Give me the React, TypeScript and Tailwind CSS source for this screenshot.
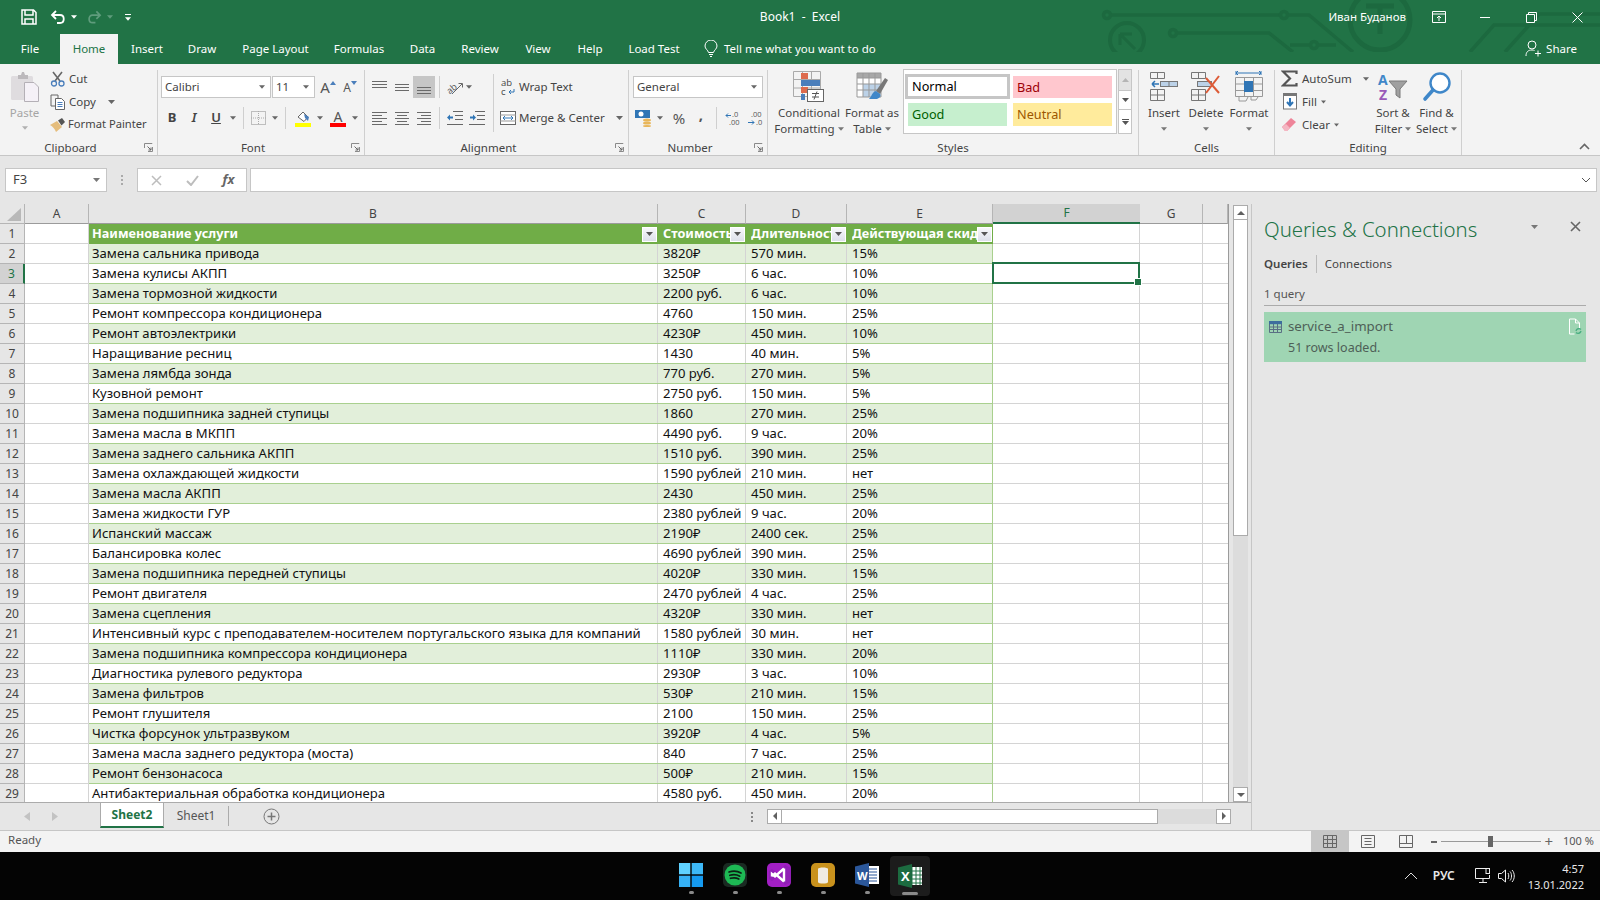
import React from "react";

const rows: [string, string, string, string][] = [
  ["Замена сальника привода", "3820₽", "570 мин.", "15%"],
  ["Замена кулисы АКПП", "3250₽", "6 час.", "10%"],
  ["Замена тормозной жидкости", "2200 руб.", "6 час.", "10%"],
  ["Ремонт компрессора кондиционера", "4760", "150 мин.", "25%"],
  ["Ремонт автоэлектрики", "4230₽", "450 мин.", "10%"],
  ["Наращивание ресниц", "1430", "40 мин.", "5%"],
  ["Замена лямбда зонда", "770 руб.", "270 мин.", "5%"],
  ["Кузовной ремонт", "2750 руб.", "150 мин.", "5%"],
  ["Замена подшипника задней ступицы", "1860", "270 мин.", "25%"],
  ["Замена масла в МКПП", "4490 руб.", "9 час.", "20%"],
  ["Замена заднего сальника АКПП", "1510 руб.", "390 мин.", "25%"],
  ["Замена охлаждающей жидкости", "1590 рублей", "210 мин.", "нет"],
  ["Замена масла АКПП", "2430", "450 мин.", "25%"],
  ["Замена жидкости ГУР", "2380 рублей", "9 час.", "20%"],
  ["Испанский массаж", "2190₽", "2400 сек.", "25%"],
  ["Балансировка колес", "4690 рублей", "390 мин.", "25%"],
  ["Замена подшипника передней ступицы", "4020₽", "330 мин.", "15%"],
  ["Ремонт двигателя", "2470 рублей", "4 час.", "25%"],
  ["Замена сцепления", "4320₽", "330 мин.", "нет"],
  ["Интенсивный курс с преподавателем-носителем португальского языка для компаний", "1580 рублей", "30 мин.", "нет"],
  ["Замена подшипника компрессора кондиционера", "1110₽", "330 мин.", "20%"],
  ["Диагностика рулевого редуктора", "2930₽", "3 час.", "10%"],
  ["Замена фильтров", "530₽", "210 мин.", "15%"],
  ["Ремонт глушителя", "2100", "150 мин.", "25%"],
  ["Чистка форсунок ультразвуком", "3920₽", "4 час.", "5%"],
  ["Замена масла заднего редуктора (моста)", "840", "7 час.", "25%"],
  ["Ремонт бензонасоса", "500₽", "210 мин.", "15%"],
  ["Антибактериальная обработка кондиционера", "4580 руб.", "450 мин.", "20%"],
];

function Caret({ c = "#666", w = 7 }: { c?: string; w?: number }) {
  return (
    <svg width={w} height={4} viewBox="0 0 7 4" className="shrink-0">
      <path d="M0 0h7L3.5 4z" fill={c} />
    </svg>
  );
}

function Launcher() {
  return (
    <svg width="9" height="9" viewBox="0 0 9 9" className="shrink-0">
      <path d="M.5 5V.5H8V1" fill="none" stroke="#8a8a8a" />
      <path d="M8.5 4v4.5H4" fill="none" stroke="#8a8a8a" />
      <path d="M3.5 3.5L7 7M7 4.5V7H4.5" fill="none" stroke="#666" />
    </svg>
  );
}

function Lines({ l, c = "#6a6a6a", w = 16, h = 14 }: { l: [number, number, number][]; c?: string; w?: number; h?: number }) {
  return (
    <svg width={w} height={h} viewBox={`0 0 ${w} ${h}`}>
      {l.map(([a, b, y], i) => (
        <path key={i} d={`M${a} ${y + 0.5}H${b}`} stroke={c} strokeWidth="1" />
      ))}
    </svg>
  );
}

function Group({ w, label, launcher, children }: { w: string; label: string; launcher?: boolean; children: React.ReactNode }) {
  return (
    <div className={`${w} shrink-0 h-[85px] mt-[6px] flex flex-col border-r border-[#cfcfcf]`}>
      <div className="h-[70px] flex">{children}</div>
      <div className={`h-[15px] flex items-center relative ${launcher ? "pr-[16px]" : ""}`}>
        <span className="flex-1 text-center text-[11.5px] text-[#444] leading-[15px]">{label}</span>
        {launcher && (
          <span className="absolute right-[4px] top-[3px]">
            <Launcher />
          </span>
        )}
      </div>
    </div>
  );
}

function Big({ w, icon, l1, l2 }: { w: string; icon: React.ReactNode; l1: string; l2?: string }) {
  return (
    <div className={`${w} shrink-0 flex flex-col items-center`}>
      <div className="h-[35px] flex items-center justify-center mt-[-1px]">{icon}</div>
      <div className="text-[11.5px] leading-[15px] text-[#444] h-[15px] mt-[1px] whitespace-nowrap">{l1}</div>
      <div className="text-[11.5px] leading-[15px] text-[#444] h-[15px] mt-px flex items-center gap-[3px] whitespace-nowrap">
        {l2}
        <Caret c="#777" w={6} />
      </div>
    </div>
  );
}

function Cell22({ children, w = "w-[22px]", on }: { children?: React.ReactNode; w?: string; on?: boolean }) {
  return <div className={`${w} h-[22px] shrink-0 flex items-center justify-center ${on ? "bg-[#c6c6c6]" : ""}`}>{children}</div>;
}

function VSep({ h = "h-[22px]", mx = "mx-[3px]" }: { h?: string; mx?: string }) {
  return <div className={`w-px ${h} ${mx} bg-[#cfcfcf] shrink-0`} />;
}

function ComboBox({ w, text }: { w: string; text: string }) {
  return (
    <div className={`${w} h-[22px] bg-white border border-[#c6c6c6] flex items-center justify-between pl-[3px] pr-[5px] text-[11.5px] text-[#444] shrink-0`}>
      <span>{text}</span>
      <Caret c="#666" w={6} />
    </div>
  );
}

function PasteIcon() {
  return (
    <svg width="30" height="34" viewBox="0 0 30 34">
      <rect x="1" y="5" width="22" height="24" rx="1.5" fill="#dfdcdf" />
      <path d="M8 4h3l1-3h2l1 3h3v4H8z" fill="#bcb9bc" />
      <path d="M14.5 11.5H24l4.5 4.5v14.5h-14z" fill="#f5f1f7" stroke="#b4b0b6" />
    </svg>
  );
}
function CutIcon() {
  return (
    <svg width="16" height="16" viewBox="0 0 16 16" fill="none">
      <path d="M3 1l7 9M12 1L5 10" stroke="#666" strokeWidth="1.6" />
      <circle cx="4" cy="12.5" r="2.5" stroke="#4a7ebb" strokeWidth="1.3" />
      <circle cx="11.5" cy="12.5" r="2.5" stroke="#4a7ebb" strokeWidth="1.3" />
    </svg>
  );
}
function CopyIcon() {
  return (
    <svg width="16" height="16" viewBox="0 0 16 16" fill="none">
      <path d="M1 1h7v3M1 1v11h4" stroke="#666" />
      <path d="M5.5 4.5h6l3 3v8h-9z" fill="#fff" stroke="#666" />
      <path d="M7.5 8.5h5M7.5 10.5h5M7.5 12.5h5" stroke="#4a7ebb" />
    </svg>
  );
}
function PainterIcon() {
  return (
    <svg width="18" height="15" viewBox="0 0 18 15">
      <path d="M1 8l7-4 5 6-6 5C6 12 3 9 1 8z" fill="#e5bd7c" />
      <path d="M9 3.5l4-2.5 3 4-3.5 3.5z" fill="#555" />
    </svg>
  );
}
function ClipboardGroup() {
  return (
    <Group w="w-[158px]" label="Clipboard" launcher>
      <div className="w-[49px] flex flex-col items-center shrink-0">
        <div className="h-[35px] flex items-center">
          <PasteIcon />
        </div>
        <div className="text-[11.5px] leading-[15px] text-[#a5a5a5]">Paste</div>
        <div className="mt-[6px]">
          <Caret c="#b0b0b0" w={6} />
        </div>
      </div>
      <div className="flex flex-col text-[11.5px] text-[#444] mt-[-3px]">
        <div className="h-[23px] flex items-center gap-[2px]">
          <span className="w-[18px] flex justify-center"><CutIcon /></span>Cut
        </div>
        <div className="h-[23px] flex items-center gap-[2px]">
          <span className="w-[18px] flex justify-center"><CopyIcon /></span>Copy
          <span className="ml-[10px]"><Caret /></span>
        </div>
        <div className="h-[23px] flex items-center gap-[1px] text-[11.2px]">
          <span className="w-[18px] flex justify-center"><PainterIcon /></span>Format Painter
        </div>
      </div>
    </Group>
  );
}

function FontGroup() {
  return (
    <Group w="w-[207px]" label="Font" launcher>
      <div className="flex flex-col pt-[6px] pl-[3px] gap-[9px]">
        <div className="flex items-center">
          <ComboBox w="w-[110px]" text="Calibri" />
          <ComboBox w="w-[43px] ml-px" text="11" />
          <div className="w-[22px] ml-[2px] flex justify-center items-start text-[15px] leading-[15px] text-[#555]">
            A
            <svg width="6" height="4" className="mt-[1px]"><path d="M3 0l3 4H0z" fill="#4a7ebb" /></svg>
          </div>
          <div className="w-[22px] flex justify-center items-end text-[12px] leading-[15px] text-[#555]">
            A
            <svg width="6" height="4" className="mb-[10px]"><path d="M3 4L0 0h6z" fill="#4a7ebb" /></svg>
          </div>
        </div>
        <div className="flex items-center">
          <Cell22><span className="text-[13px] font-bold text-[#444]">B</span></Cell22>
          <Cell22><span className="text-[13px] italic font-semibold text-[#444] font-['Liberation_Serif',serif]">I</span></Cell22>
          <Cell22><span className="text-[13px] font-semibold underline text-[#444]">U</span></Cell22>
          <Cell22 w="w-[11px]"><Caret w={6} /></Cell22>
          <VSep mx="mx-[5px]" />
          <Cell22 w="w-[22px] ml-[-2px]">
            <svg width="15" height="14" viewBox="0 0 15 14">
              <rect x=".5" y=".5" width="14" height="13" fill="none" stroke="#888" strokeDasharray="1 1" />
              <path d="M7.5 0v14M0 7h15" stroke="#aaa" strokeDasharray="1 1" />
            </svg>
          </Cell22>
          <Cell22 w="w-[11px]"><Caret w={6} /></Cell22>
          <VSep mx="mx-[5px]" />
          <Cell22 w="w-[22px] ml-[1px]">
            <svg width="17" height="17" viewBox="0 0 17 17">
              <path d="M3 7l5-5 5 5-4 4.5z" fill="#fff" stroke="#666" />
              <path d="M9 4l5 3-1 4-3-3z" fill="#4a7ebb" />
              <rect x="0" y="13" width="16" height="4" fill="#ffff00" />
            </svg>
          </Cell22>
          <Cell22 w="w-[11px]"><Caret w={6} /></Cell22>
          <Cell22 w="w-[22px] ml-[2px]">
            <div className="flex flex-col items-center leading-none">
              <span className="text-[14px] leading-[13px] text-[#555]">A</span>
              <span className="w-[16px] h-[4px] bg-[#ff0000]" />
            </div>
          </Cell22>
          <Cell22 w="w-[11px]"><Caret w={6} /></Cell22>
        </div>
      </div>
    </Group>
  );
}

function AlignmentGroup() {
  const L = (l: [number, number, number][]) => <Lines l={l} />;
  return (
    <Group w="w-[264px]" label="Alignment" launcher>
      <div className="flex flex-col pt-[6px] pl-[4px] gap-[9px] w-[128px] shrink-0">
        <div className="flex items-center">
          <Cell22>{L([[0, 15, 1], [0, 15, 4], [0, 15, 7]])}</Cell22>
          <Cell22>{L([[1, 15, 4], [1, 15, 7], [1, 15, 10]])}</Cell22>
          <Cell22 on>{L([[1, 15, 7], [1, 15, 10], [1, 15, 13]])}</Cell22>
          <VSep mx="mx-[4px]" />
          <Cell22>
            <svg width="18" height="16" viewBox="0 0 18 16" fill="none" className="overflow-visible">
              <text x="1" y="12" fontSize="9" fill="#555" transform="rotate(-40 7 10)" fontFamily="Open Sans">ab</text>
              <path d="M6 15L16 5M12.5 4.5H16.5V8.5" stroke="#666" />
            </svg>
          </Cell22>
          <Caret w={6} />
        </div>
        <div className="flex items-center">
          <Cell22>{L([[0, 15, 1], [0, 10, 4], [0, 15, 7], [0, 10, 10], [0, 15, 13]])}</Cell22>
          <Cell22>{L([[1, 15, 1], [3, 13, 4], [1, 15, 7], [3, 13, 10], [1, 15, 13]])}</Cell22>
          <Cell22>{L([[1, 15, 1], [5, 15, 4], [1, 15, 7], [5, 15, 10], [1, 15, 13]])}</Cell22>
          <VSep mx="mx-[4px]" />
          <Cell22>
            <svg width="16" height="14" viewBox="0 0 16 14">
              <path d="M6 .5h10M8 4.500h8M8 8.500h8M0 13.500h16" stroke="#666" />
              <path d="M0 6.500l3-3v2h3v2H3v2z" fill="#2f75b5" />
            </svg>
          </Cell22>
          <Cell22>
            <svg width="16" height="14" viewBox="0 0 16 14">
              <path d="M6 .5h10M8 4.500h8M8 8.500h8M0 13.500h16" stroke="#666" />
              <path d="M7 6.500l-3-3v2H1v2h3v2z" fill="#2f75b5" />
            </svg>
          </Cell22>
        </div>
      </div>
      <div className="w-px h-[58px] mt-[4px] bg-[#cfcfcf] shrink-0" />
      <div className="flex flex-col pt-[6px] pl-[6px] gap-[9px] text-[11.5px] text-[#444]">
        <div className="h-[22px] flex items-center gap-[3px]">
          <svg width="16" height="18" viewBox="0 0 16 18" className="overflow-visible">
            <text x="1" y="8" fontSize="9.500" fill="#444" fontFamily="Open Sans">ab</text>
            <text x="1" y="17" fontSize="9.500" fill="#444" fontFamily="Open Sans">c</text>
            <path d="M9 14h5v-3M9 14l2-2M9 14l2 2" stroke="#2f75b5" fill="none" />
          </svg>
          Wrap Text
        </div>
        <div className="h-[22px] flex items-center gap-[3px]">
          <svg width="16" height="16" viewBox="0 0 16 16" fill="none">
            <rect x=".5" y="1.500" width="15" height="13" fill="#fff" stroke="#666" />
            <path d="M0 5h16M0 11h16" stroke="#999" />
            <path d="M3 8h10M3 8l2-2M3 8l2 2M13 8l-2-2M13 8l-2 2" stroke="#2f75b5" />
          </svg>
          Merge &amp; Center
          <span className="ml-[8px]"><Caret /></span>
        </div>
      </div>
    </Group>
  );
}

function NumberGroup() {
  return (
    <Group w="w-[139px]" label="Number" launcher>
      <div className="flex flex-col pt-[6px] pl-[4px] gap-[9px]">
        <ComboBox w="w-[130px]" text="General" />
        <div className="flex items-center">
          <Cell22>
            <svg width="18" height="18" viewBox="0 0 18 18">
              <rect x="0" y="1" width="15" height="8" fill="#2f75b5" />
              <circle cx="6" cy="5" r="2.500" fill="#fff" />
              <ellipse cx="12" cy="11" rx="4" ry="1.600" fill="#e8b65a" />
              <ellipse cx="12" cy="14" rx="4" ry="1.600" fill="#e8b65a" />
              <ellipse cx="12" cy="17" rx="4" ry="1.100" fill="#e8b65a" />
            </svg>
          </Cell22>
          <Cell22 w="w-[10px]"><Caret w={6} /></Cell22>
          <Cell22 w="w-[26px] ml-[1px]"><span className="text-[15px] text-[#555]">%</span></Cell22>
          <Cell22 w="w-[18px]"><span className="text-[15px] font-bold text-[#555] leading-none mb-[7px]">,</span></Cell22>
          <VSep mx="mx-[6px]" />
          <Cell22>
            <svg width="17" height="15" viewBox="0 0 17 15" className="overflow-visible">
              <text x="6" y="6" fontSize="7.500" fill="#555" fontFamily="Open Sans">.0</text>
              <text x="3" y="14" fontSize="7.500" fill="#555" fontFamily="Open Sans">.00</text>
              <path d="M0 4.500h5M0 4.500l2-2M0 4.500l2 2" stroke="#2f75b5" fill="none" />
            </svg>
          </Cell22>
          <Cell22>
            <svg width="17" height="15" viewBox="0 0 17 15" className="overflow-visible">
              <text x="3" y="6" fontSize="7.500" fill="#555" fontFamily="Open Sans">.00</text>
              <text x="8" y="14" fontSize="7.500" fill="#555" fontFamily="Open Sans">.0</text>
              <path d="M0 11.500h6M6 11.500l-2-2M6 11.500l-2 2" stroke="#2f75b5" fill="none" />
            </svg>
          </Cell22>
        </div>
      </div>
    </Group>
  );
}

function CondIcon() {
  return (
    <svg width="32" height="32" viewBox="0 0 32 32">
      <path d="M.5.5h27v25H.5zM9.500.5v25M18.500.5v25M.5 8.500h27M.5 17h27" fill="none" stroke="#aaa" />
      <rect x="8" y="2" width="7" height="6" fill="#dd6b4d" />
      <rect x="8" y="9" width="19" height="6" fill="#4a7ebb" />
      <rect x="8" y="16" width="7" height="6" fill="#dd6b4d" />
      <rect x="8" y="23" width="4" height="6" fill="#4a7ebb" />
      <rect x="14.500" y="18.500" width="16" height="12" fill="#fff" stroke="#666" />
      <path d="M19 22.500h7M19 26h7M24 20.500l-3 8" stroke="#555" fill="none" />
    </svg>
  );
}
function TableIcon() {
  return (
    <svg width="32" height="32" viewBox="0 0 32 32">
      <rect x="1" y="2" width="24" height="24" fill="#fff" />
      <rect x="1" y="2" width="24" height="5" fill="#a8a8a8" />
      <rect x="7" y="13" width="18" height="13" fill="#bcd2e8" />
      <path d="M1 2v24h24V2zM7 2v24M13 2v24M19 2v24M1 7h24M1 13h24M1 19h24" fill="none" stroke="#999" />
      <path d="M20 20l9-13 3 2-8 14z" fill="#777" />
      <path d="M20 20c-4 1-4 5-7 8h8c3-1 4-3 3-5z" fill="#3f87c9" />
    </svg>
  );
}
function InsertIcon() {
  return (
    <svg width="28" height="30" viewBox="0 0 28 30" fill="none">
      <path d="M.5.5h14v6H.5zM7.500.5v6M.5 17.500h14v11H.5zM7.500 17.500v11M.5 23h14" stroke="#777" />
      <rect x="10.500" y="9.500" width="17" height="5" fill="#bcd2e8" stroke="#777" />
      <path d="M19 9.500v5" stroke="#777" />
      <path d="M2 12h7M2 12l3-3M2 12l3 3" stroke="#2f75b5" strokeWidth="1.500" />
    </svg>
  );
}
function DeleteIcon() {
  return (
    <svg width="30" height="30" viewBox="0 0 30 30" fill="none">
      <path d="M.5.5h14v6H.5zM7.500.5v6M.5 17.500h14v11H.5zM7.500 17.500v11M.5 23h14" stroke="#777" />
      <rect x="6.500" y="9.500" width="14" height="5" fill="#bcd2e8" stroke="#777" />
      <path d="M15 6l13 15M28 4L15 21" stroke="#dd5b37" strokeWidth="2" />
    </svg>
  );
}
function FormatIcon() {
  return (
    <svg width="28" height="32" viewBox="0 0 28 32" fill="none">
      <path d="M1 2h25M1 0v4M26 0v4M1 2l2-2M1 2l2 2M26 2l-2-2M26 2l-2 2" stroke="#2f75b5" />
      <path d="M.5 6.500h27v19H.5zM9.500 6.500v19M18.500 6.500v19M.5 13h27M.5 19.500h27" stroke="#999" />
      <rect x="9" y="10" width="9" height="11" fill="#2f75b5" />
      <path d="M4 26v4h7l2-4M16 26v3h5l2-3" stroke="#999" />
    </svg>
  );
}
function StylesGroup() {
  return (
    <Group w="w-[371px]" label="Styles">
      <div className="ml-[8px]" />
      <Big w="w-[66px]" icon={<CondIcon />} l1="Conditional" l2="Formatting" />
      <Big w="w-[60px]" icon={<TableIcon />} l1="Format as" l2="Table" />
      <div className="ml-[1px] mt-[-1px] w-[214px] h-[65px] bg-white border border-[#c6c6c6] flex flex-col gap-[5px] p-[1px] pt-[4px] shrink-0 text-[12.7px] leading-none">
        <div className="flex gap-[3px] h-[25px]">
          <div className="w-[105px] border-[3px] border-[#c6c6c6] flex items-center pl-[4px] text-[#000]">Normal</div>
          <div className="w-[99px] h-[22px] mt-[2px] bg-[#ffc7ce] flex items-center pl-[4px] text-[#9c0006]">Bad</div>
        </div>
        <div className="flex gap-[3px] h-[23px] mt-[-1px]">
          <div className="w-[99px] ml-[3px] mr-[3px] bg-[#c6efce] flex items-center pl-[4px] text-[#006100]">Good</div>
          <div className="w-[99px] bg-[#ffeb9c] flex items-center pl-[4px] text-[#9c5700]">Neutral</div>
        </div>
      </div>
      <div className="w-[14px] mt-[-1px] h-[65px] ml-px flex flex-col border border-[#c6c6c6] shrink-0">
        <div className="h-[21px] bg-[#e3e3e3] border-b border-[#c6c6c6] flex items-center justify-center">
          <svg width="7" height="4"><path d="M3.500 0L7 4H0z" fill="#b5b5b5" /></svg>
        </div>
        <div className="h-[19px] bg-white border-b border-[#c6c6c6] flex items-center justify-center"><Caret c="#555" /></div>
        <div className="flex-1 bg-white flex flex-col gap-[1px] items-center justify-center">
          <span className="w-[7px] h-px bg-[#555]" />
          <Caret c="#555" />
        </div>
      </div>
    </Group>
  );
}

function CellsGroup() {
  return (
    <Group w="w-[136px]" label="Cells">
      <div className="ml-[4px]" />
      <Big w="w-[42px]" icon={<InsertIcon />} l1="Insert" />
      <Big w="w-[42px]" icon={<DeleteIcon />} l1="Delete" />
      <Big w="w-[44px]" icon={<FormatIcon />} l1="Format" />
    </Group>
  );
}

function EditingGroup() {
  return (
    <Group w="w-[187px]" label="Editing">
      <div className="flex flex-col w-[96px] pl-[6px] shrink-0 text-[11.5px] text-[#444] mt-[-3px]">
        <div className="h-[23px] flex items-center gap-[4px]">
          <svg width="17" height="17" viewBox="0 0 17 17" className="shrink-0"><path d="M15.500 4V1.500H2L9 8.500 2 15.500h13.500V13" fill="none" stroke="#555" strokeWidth="2.200" /></svg>
          AutoSum
          <span className="ml-[7px]"><Caret w={6} /></span>
        </div>
        <div className="h-[23px] flex items-center gap-[4px]">
          <svg width="17" height="17" viewBox="0 0 17 17" className="shrink-0">
            <rect x="2.500" y=".5" width="13" height="15.500" fill="#fff" stroke="#777" />
            <rect x="2" y="0" width="14" height="3" fill="#777" />
            <path d="M9 5v7M6 9l3 3.500L12 9" stroke="#2f75b5" strokeWidth="2" fill="none" />
          </svg>
          Fill<Caret w={5} />
        </div>
        <div className="h-[23px] flex items-center gap-[4px]">
          <svg width="17" height="15" viewBox="0 0 17 15" className="shrink-0">
            <path d="M1 10l9-9 5 4-9 9H4z" fill="#ee8499" />
            <path d="M1 10l4-3 4 4-3 3H4z" fill="#f4b6c2" />
          </svg>
          Clear<Caret w={5} />
        </div>
      </div>
      <Big
        w="w-[44px]"
        icon={
          <svg width="32" height="30" viewBox="0 0 32 30">
            <text x="1" y="13" fontSize="14" fontWeight="700" fill="#3f87c9" fontFamily="Open Sans">A</text>
            <text x="2" y="28" fontSize="14" fontWeight="700" fill="#9a5bb8" fontFamily="Open Sans">Z</text>
            <path d="M12 9h18l-7 8v9l-4-3v-6z" fill="#a0a0a0" stroke="#7a7a7a" />
          </svg>
        }
        l1="Sort &"
        l2="Filter"
      />
      <Big
        w="w-[43px]"
        icon={
          <svg width="30" height="32" viewBox="0 0 30 32" fill="none">
            <circle cx="18" cy="12" r="9.500" stroke="#3f87c9" strokeWidth="2.400" fill="#fff" />
            <path d="M11 19l-8 9" stroke="#3f87c9" strokeWidth="3.600" strokeLinecap="round" />
          </svg>
        }
        l1="Find &"
        l2="Select"
      />
    </Group>
  );
}

function FilterBtn() {
  return (
    <div className="w-[15px] h-[15px] bg-gradient-to-b from-[#f7f8fb] to-[#dde0ea] border border-[#fff] flex items-center justify-center shrink-0 mr-[1px]">
      <Caret c="#555" w={7} />
    </div>
  );
}

function HeaderCol({ w, t, on }: { w: string; t: string; on?: boolean }) {
  return (
    <div className={`${w} h-5 shrink-0 flex items-center justify-center text-[12px] ${on ? "bg-[#d2d2d2] text-[#217346] border-b-2 border-[#217346]" : "bg-[#e6e6e6] text-[#444] border-b border-[#9b9b9b] border-r border-r-[#b5b5b5]"}`}>
      {t}
    </div>
  );
}

function EmptyCells({ n }: { n: number }) {
  const border = "h-5 shrink-0 bg-white border-r border-b border-[#d4d4d4]";
  return (
    <>
      <div className={`w-[147px] ${border} relative`}>
        {n === 3 && (
          <div className="absolute left-[-1px] top-[-2px] w-[148px] h-[22px] border-2 border-[#217346] z-10">
            <div className="absolute right-[-4px] bottom-[-4px] w-[6px] h-[6px] bg-[#217346] border border-white box-content" />
          </div>
        )}
      </div>
      <div className={`w-[63px] ${border}`} />
      <div className="w-[25px] h-5 shrink-0 bg-white border-b border-[#d4d4d4]" />
    </>
  );
}

function Grid() {
  return (
    <div className="w-[1229px] h-full overflow-hidden flex flex-col shrink-0 border-r border-[#9b9b9b] text-[13.1px] text-[#111]">
      <div className="flex shrink-0">
        <div className="w-[25px] h-5 shrink-0 bg-[#e6e6e6] border-b border-r border-[#b5b5b5] flex items-end justify-end pr-[3px] pb-[2px]">
          <svg width="14" height="13"><path d="M14 0v13H0z" fill="#b8b8b8" /></svg>
        </div>
        <HeaderCol w="w-[64px]" t="A" />
        <HeaderCol w="w-[569px]" t="B" />
        <HeaderCol w="w-[88px]" t="C" />
        <HeaderCol w="w-[101px]" t="D" />
        <HeaderCol w="w-[146px]" t="E" />
        <HeaderCol w="w-[147px]" t="F" on />
        <HeaderCol w="w-[63px]" t="G" />
        <HeaderCol w="w-[25px]" t="" />
      </div>
      <div className="flex shrink-0">
        <div className="w-[25px] h-5 shrink-0 bg-[#e6e6e6] border-r border-b border-[#b5b5b5] flex items-center justify-center text-[12px] text-[#444]">1</div>
        <div className="w-[64px] h-5 shrink-0 bg-white border-r border-b border-[#d4d4d4]" />
        <div className="flex bg-[#70ad47] text-white font-bold text-[12.7px] h-5">
          <div className="w-[569px] flex items-center pl-[3px] justify-between overflow-hidden">
            <span>Наименование услуги</span>
            <FilterBtn />
          </div>
          <div className="w-[88px] flex items-center pl-[5px] overflow-hidden">
            <span className="flex-1 overflow-hidden whitespace-nowrap">Стоимость</span>
            <FilterBtn />
          </div>
          <div className="w-[101px] flex items-center pl-[5px] overflow-hidden">
            <span className="flex-1 overflow-hidden whitespace-nowrap">Длительность</span>
            <FilterBtn />
          </div>
          <div className="w-[146px] flex items-center pl-[5px] overflow-hidden">
            <span className="flex-1 overflow-hidden whitespace-nowrap">Действующая скидка</span>
            <FilterBtn />
          </div>
        </div>
        <EmptyCells n={1} />
      </div>
      {rows.map((r, i) => {
        const n = i + 2;
        const even = n % 2 === 0;
        const bg = even ? "bg-[#e2efda]" : "bg-white";
        return (
          <div key={n} className="flex shrink-0">
            <div className={`w-[25px] h-5 shrink-0 border-b flex items-center justify-center text-[12px] ${n === 3 ? "bg-[#d2d2d2] text-[#217346] border-r-2 border-r-[#217346] border-b-[#b5b5b5]" : "bg-[#e6e6e6] text-[#444] border-r border-[#b5b5b5]"}`}>{n}</div>
            <div className="w-[64px] h-5 shrink-0 bg-white border-r border-b border-[#d4d4d4]" />
            <div className={`flex ${bg} h-5 border-b border-[#a9d08e]`}>
              <div className="w-[569px] flex items-center pl-[3px] border-r border-[#d4d4d4] whitespace-nowrap overflow-hidden">{r[0]}</div>
              <div className="w-[88px] flex items-center pl-[5px] border-r border-[#d4d4d4] whitespace-nowrap overflow-hidden">{r[1]}</div>
              <div className="w-[101px] flex items-center pl-[5px] border-r border-[#d4d4d4] whitespace-nowrap overflow-hidden">{r[2]}</div>
              <div className="w-[146px] flex items-center pl-[5px] border-r border-[#a9d08e] whitespace-nowrap overflow-hidden">{r[3]}</div>
            </div>
            <EmptyCells n={n} />
          </div>
        );
      })}
    </div>
  );
}

function SbBtn({ d, dim }: { d: string; dim?: boolean }) {
  return (
    <div className="w-[15px] h-[15px] bg-white border border-[#ababab] flex items-center justify-center shrink-0">
      <svg width="8" height="8" viewBox="0 0 8 8"><path d={d} fill={dim ? "#ababab" : "#606060"} /></svg>
    </div>
  );
}

function VScroll() {
  return (
    <div className="w-[15px] ml-[4px] mt-[1px] flex flex-col shrink-0 bg-[#dcdcdc]">
      <SbBtn d="M4 2l4 4H0z" />
      <div className="h-[316px] bg-white border-x border-b border-[#ababab]" />
      <div className="flex-1" />
      <SbBtn d="M4 6L0 2h8z" />
    </div>
  );
}

function SheetBar() {
  return (
    <div className="h-[28px] flex items-center bg-[#e6e6e6] border-t border-[#ababab] shrink-0">
      <div className="w-[100px] flex items-center pl-[24px] gap-[22px] shrink-0">
        <svg width="6" height="9"><path d="M6 0v9L0 4.500z" fill="#c2c2c2" /></svg>
        <svg width="6" height="9"><path d="M0 0v9l6-4.500z" fill="#c2c2c2" /></svg>
      </div>
      <div className="w-[64px] h-[25px] self-start bg-white border-x border-[#ababab] border-b-2 border-b-[#217346] flex items-center justify-center text-[12px] font-bold text-[#217346] shrink-0 pt-px">Sheet2</div>
      <div className="w-[65px] h-[20px] flex items-center justify-center text-[12px] text-[#555] border-r border-[#ababab] shrink-0 mb-[1px]">Sheet1</div>
      <div className="ml-[34px] shrink-0">
        <svg width="17" height="17" viewBox="0 0 17 17" fill="none">
          <circle cx="8.500" cy="8.500" r="7.500" stroke="#777" />
          <path d="M8.500 4.500v8M4.500 8.500h8" stroke="#777" strokeWidth="1.500" />
        </svg>
      </div>
      <div className="ml-[471px] flex flex-col gap-[2px] shrink-0">
        <span className="w-[2px] h-[2px] bg-[#888]" /><span className="w-[2px] h-[2px] bg-[#888]" /><span className="w-[2px] h-[2px] bg-[#888]" />
      </div>
      <div className="ml-[14px] flex h-[15px] shrink-0 w-[464px] bg-[#dcdcdc] mb-[1px]">
        <SbBtn d="M2 4l4-4v8z" />
        <div className="w-[376px] bg-white border-y border-r border-[#ababab]" />
        <div className="flex-1" />
        <SbBtn d="M6 4L2 0v8z" />
      </div>
    </div>
  );
}

function SidePanel() {
  return (
    <div className="flex-1 bg-[#e6e6e6] border-l border-[#c6c6c6] pl-[12px] pr-[14px] flex flex-col">
      <div className="flex items-center h-[48px] mt-[1px]">
        <span className="text-[20.4px] text-[#217346] font-light flex-1 leading-none">Queries &amp; Connections</span>
        <span className="mr-[31px] mb-[4px]"><Caret c="#777" w={9} /></span>
        <svg width="11" height="11" viewBox="0 0 11 11" className="mr-[5px] mb-[6px]"><path d="M1 1l9 9M10 1l-9 9" stroke="#666" strokeWidth="1.600" /></svg>
      </div>
      <div className="flex items-center text-[11.5px] text-[#444] mt-[2px]">
        <span className="font-semibold">Queries</span>
        <span className="w-px h-[18px] bg-[#bbb] mx-[8px]" />
        <span>Connections</span>
      </div>
      <div className="text-[11.5px] text-[#555] mt-[12px] pb-[2px] border-b border-[#ababab] leading-[18px]">1 query</div>
      <div className="mt-[6px] h-[50px] bg-[#9fd5b3] flex flex-col pl-[5px] pr-[4px] pt-[4px]">
        <div className="flex items-center h-[21px]">
          <svg width="14" height="12" viewBox="0 0 14 12" fill="none" className="shrink-0">
            <path d="M.5.5h12v11H.5zM.5 6h12M.5 8.500h12M4.500 3v8.500M8.500 3v8.500" stroke="#5a6f84" />
            <rect x="0" y="0" width="13" height="3.200" fill="#3d6e9e" />
          </svg>
          <span className="ml-[5px] text-[13.3px] text-[#4e5f57] flex-1">service_a_import</span>
          <svg width="14" height="18" viewBox="0 0 14 18" fill="none" className="shrink-0">
            <path d="M1.500 1h6l4 4v5M1.500 1v15h5M7.500 1v4h4" stroke="#fff" />
            <path d="M8 13a3 3 0 0 1 5-1.500M13 13a3 3 0 0 1-5 1.500" stroke="#4caf83" strokeWidth="1.400" />
          </svg>
        </div>
        <div className="ml-[19px] text-[12.5px] text-[#4e5f57] leading-[20px] mt-px">51 rows loaded.</div>
      </div>
    </div>
  );
}

function StatusBar() {
  return (
    <div className="h-[22px] bg-[#f3f3f3] border-t border-[#c6c6c6] flex items-center text-[11.5px] text-[#555] shrink-0">
      <span className="ml-[8px] mb-[3px]">Ready</span>
      <div className="ml-auto flex items-center h-full pr-[6px]">
        <div className="w-[38px] h-full bg-[#c6c6c6] flex items-center justify-center">
          <svg width="14" height="13" viewBox="0 0 14 13" fill="none"><path d="M.5.5h13v12H.5zM.5 4.500h13M.5 8.500h13M4.500.5v12M9.500.5v12" stroke="#666" /></svg>
        </div>
        <div className="w-[38px] flex items-center justify-center">
          <svg width="14" height="13" viewBox="0 0 14 13" fill="none"><path d="M.5.5h13v12H.5z" stroke="#666" /><path d="M3.500 3.500h7M3.500 6.500h7M3.500 9.500h7" stroke="#666" /></svg>
        </div>
        <div className="w-[38px] flex items-center justify-center">
          <svg width="14" height="13" viewBox="0 0 14 13" fill="none"><path d="M.5.5h13v12H.5zM.5 8.500h13M7.500.5v8" stroke="#666" /></svg>
        </div>
        <span className="ml-[6px] w-[6px] h-[2px] bg-[#666]" />
        <div className="ml-[4px] w-[100px] h-px bg-[#999] relative">
          <span className="absolute left-[47px] top-[-5px] w-[5px] h-[11px] bg-[#666]" />
        </div>
        <span className="ml-[3px] text-[15px] leading-none text-[#666]">+</span>
        <span className="ml-[10px] w-[31px] text-[11px] whitespace-nowrap">100 %</span>
      </div>
    </div>
  );
}

function TaskIcon({ children, dash }: { children: React.ReactNode; dash?: boolean }) {
  return (
    <div className={`flex flex-col items-center justify-start shrink-0 ${dash ? "w-[40px] h-[40px] bg-[#1c1c1c] rounded-[4px] mt-[4px] ml-[1px] pt-[8px]" : "w-[44px] h-[39px] mt-[4px] pt-[7px]"}`}>
      {children}
      <span className={`mt-[4px] h-[3px] rounded-full ${dash ? "w-[16px] bg-[#8a8a8a]" : "w-[5px] bg-[#8a8a8a]"}`} />
    </div>
  );
}

function Taskbar() {
  return (
    <div className="h-[48px] bg-[#040404] flex items-start shrink-0 text-white">
      <div className="ml-[669px] flex items-start">
        <TaskIcon>
          <svg width="24" height="24" viewBox="0 0 24 24">
            <rect x="0" y="0" width="11.300" height="11.300" fill="#5fd1ff" />
            <rect x="12.700" y="0" width="11.300" height="11.300" fill="#3db8f7" />
            <rect x="0" y="12.700" width="11.300" height="11.300" fill="#36b1f5" />
            <rect x="12.700" y="12.700" width="11.300" height="11.300" fill="#159af0" />
          </svg>
        </TaskIcon>
        <TaskIcon>
          <svg width="24" height="24" viewBox="0 0 24 24" fill="none">
            <rect width="24" height="24" rx="5" fill="#1a2a22" />
            <circle cx="12" cy="12" r="10.500" fill="#1db954" />
            <path d="M6 9c4-1.200 8.500-1 12 1M6.800 12.300c3.500-1 7-.8 10 .9M7.500 15.300c3-.8 6-.6 8.300.7" stroke="#0c2015" strokeWidth="1.700" strokeLinecap="round" />
          </svg>
        </TaskIcon>
        <TaskIcon>
          <svg width="24" height="24" viewBox="0 0 24 24" fill="none">
            <rect width="24" height="24" rx="5" fill="#a21fc4" />
            <path d="M24 5v14l-6 3-8-8-5 4-3-2V8l3-2 5 4 8-8z" fill="#7c1fa6" opacity=".45" />
            <path d="M17 5.500v13M17 5.500L8 13.500 5 11v2.500M17 18.500L8 10.500 5 13" stroke="#fff" strokeWidth="2.400" />
          </svg>
        </TaskIcon>
        <TaskIcon>
          <svg width="24" height="24" viewBox="0 0 24 24">
            <rect width="24" height="24" rx="5" fill="#c9921d" />
            <path d="M7 6c0-2 10-2 10 0v13c0 2-10 2-10 0z" fill="#f0ece3" />
          </svg>
        </TaskIcon>
        <TaskIcon>
          <svg width="24" height="24" viewBox="0 0 24 24">
            <rect x="11" y="3" width="13" height="18" fill="#fff" />
            <path d="M13 6h9M13 9h9M13 12h9M13 15h9M13 18h9" stroke="#2b579a" />
            <path d="M0 3.500L14 0v24L0 20.500z" fill="#2b579a" />
            <text x="2" y="16.500" fontSize="11" fontWeight="700" fill="#fff" fontFamily="Open Sans">W</text>
          </svg>
        </TaskIcon>
        <TaskIcon dash>
          <svg width="24" height="24" viewBox="0 0 24 24">
            <rect x="11" y="3" width="13" height="18" fill="#fff" />
            <path d="M14 3v18M18 3v18M22 3v18M11 7h13M11 11h13M11 15h13M11 19h13" stroke="#217346" />
            <path d="M0 3.500L14 0v24L0 20.500z" fill="#1c6b40" />
            <text x="3" y="17" fontSize="13" fontWeight="700" fill="#fff" fontFamily="Open Sans">X</text>
          </svg>
        </TaskIcon>
      </div>
      <div className="ml-auto flex items-center h-full mr-[16px]">
        <svg width="14" height="8" viewBox="0 0 14 8" fill="none" className="mr-[15px]"><path d="M1 7l6-6 6 6" stroke="#ddd" /></svg>
        <span className="text-[12px] font-semibold text-[#e8e8e8] mr-[20px]">РУС</span>
        <svg width="16" height="16" viewBox="0 0 16 16" fill="none" className="mr-[7px]">
          <path d="M11 .5H.5v10h14V7M4 14.500h8M8 11v3" stroke="#eee" />
          <rect x="11" y=".5" width="3.500" height="5" stroke="#eee" fill="#040404" />
        </svg>
        <svg width="17" height="16" viewBox="0 0 17 16" fill="none" className="mr-[13px]">
          <path d="M.5 5.500h3L7.500 2v12l-4-3.500h-3zM10 5c1 1.500 1 4.500 0 6M12 3.500c2 2 2 7 0 9M14 2c3 3 3 9 0 12" stroke="#eee" />
        </svg>
        <div className="flex flex-col items-end text-[11px] text-[#e8e8e8] leading-[16px] font-normal pt-[2px]">
          <span>4:57</span>
          <span>13.01.2022</span>
        </div>
      </div>
    </div>
  );
}

function Circuit() {
  return (
    <svg width="500" height="52" viewBox="1100 0 500 52" className="absolute right-0 top-0" fill="none" stroke="#1c693f" strokeWidth="3.500">
      <circle cx="1107" cy="15" r="3.500" />
      <path d="M1111 15H1280" />
      <circle cx="1284" cy="15" r="3.500" />
      <path d="M1288 15h21l44 37" />
      <circle cx="1173" cy="33" r="3.500" />
      <path d="M1177 33h92l24 19" />
      <circle cx="1314" cy="45" r="3.500" />
      <path d="M1290 45h20M1318 45h18" />
      <circle cx="1127" cy="40" r="17" strokeWidth="4" />
      <path d="M1120 34h12M1120 34v11M1120 34l15 15" strokeWidth="3" />
      <circle cx="1380" cy="20" r="30" strokeWidth="5" />
      <path d="M1366 6h28M1380 6v28" strokeWidth="5" />
      <path d="M1470 52l24-27h106M1505 52l34-38h61" />
    </svg>
  );
}

export default function App() {
  return (
    <div className="w-[1600px] h-[900px] overflow-hidden flex flex-col bg-[#e6e6e6] font-['Open_Sans','Noto_Sans',sans-serif]">
      <div className="h-[64px] bg-[#217346] relative shrink-0 text-white">
        <Circuit />
        <div className="relative flex h-[34px]">
          <div className="w-[400px] flex items-center shrink-0">
            <svg width="16" height="16" viewBox="0 0 16 16" fill="none" className="ml-[21px]">
              <path d="M1 1h11.500L15 3.500V15H1z" stroke="#fff" strokeWidth="1.500" />
              <path d="M4 1v5h8V1M4 15v-5h8v5" stroke="#fff" strokeWidth="1.500" />
            </svg>
            <svg width="16" height="14" viewBox="0 0 16 14" fill="none" className="ml-[13px]">
              <path d="M6 1L2 5l4 4M2 5h8c5 0 5 8 0 8H7" stroke="#fff" strokeWidth="1.800" />
            </svg>
            <span className="ml-[5px]"><Caret c="#fff" w={6} /></span>
            <svg width="15" height="14" viewBox="0 0 16 14" fill="none" className="ml-[10px]">
              <path d="M10 1l4 4-4 4M14 5H6c-5 0-5 8 0 8h3" stroke="#5f9c7c" strokeWidth="1.800" />
            </svg>
            <span className="ml-[5px]"><Caret c="#5f9c7c" w={6} /></span>
            <span className="ml-[12px] flex flex-col items-center gap-[2px]">
              <span className="w-[6px] h-px bg-white" />
              <Caret c="#fff" w={6} />
            </span>
          </div>
          <div className="flex-1 flex items-center justify-center text-[12px]">Book1&nbsp; -&nbsp; Excel</div>
          <div className="w-[400px] flex items-center justify-end shrink-0">
            <span className="text-[11.5px] mr-[10px]">Иван Буданов</span>
            <div className="w-[46px] flex justify-center">
              <svg width="14" height="12" viewBox="0 0 14 12" fill="none"><path d="M.5.5h13v11H.5zM.5 3h13M7 10V5M5 7l2-2 2 2" stroke="#fff" /></svg>
            </div>
            <div className="w-[46px] flex justify-center"><span className="w-[10px] h-px bg-white" /></div>
            <div className="w-[46px] flex justify-center">
              <svg width="11" height="11" viewBox="0 0 11 11" fill="none"><path d="M.5 2.500h8v8h-8zM2.500 2.500V.5h8v8h-2" stroke="#fff" /></svg>
            </div>
            <div className="w-[46px] flex justify-center">
              <svg width="11" height="11" viewBox="0 0 11 11" fill="none"><path d="M.5.5l10 10M10.500.5l-10 10" stroke="#fff" /></svg>
            </div>
          </div>
        </div>
        <div className="relative flex h-[30px] text-[11.5px] items-stretch">
          <div className="w-[60px] flex items-center justify-center pb-[1px]">File</div>
          <div className="w-[58px] flex items-center justify-center bg-[#f3f3f3] text-[#217346] pb-[1px]">Home</div>
          <div className="w-[58px] flex items-center justify-center pb-[1px]">Insert</div>
          <div className="w-[52px] flex items-center justify-center pb-[1px]">Draw</div>
          <div className="w-[95px] flex items-center justify-center pb-[1px]">Page Layout</div>
          <div className="w-[72px] flex items-center justify-center pb-[1px]">Formulas</div>
          <div className="w-[55px] flex items-center justify-center pb-[1px]">Data</div>
          <div className="w-[60px] flex items-center justify-center pb-[1px]">Review</div>
          <div className="w-[56px] flex items-center justify-center pb-[1px]">View</div>
          <div className="w-[48px] flex items-center justify-center pb-[1px]">Help</div>
          <div className="w-[80px] flex items-center justify-center pb-[1px]">Load Test</div>
          <div className="ml-[10px] flex items-center gap-[6px] pb-[1px]">
            <svg width="14" height="17" viewBox="0 0 14 17" fill="none">
              <path d="M4.500 12.500C4 10 1 9 1 6a6 6 0 0 1 12 0c0 3-3 4-3.500 6.500zM5 14.500h4M6 16.500h2" stroke="#fff" />
            </svg>
            Tell me what you want to do
          </div>
          <div className="ml-auto mr-[23px] flex items-center gap-[5px] pb-[1px]">
            <svg width="16" height="17" viewBox="0 0 16 17" fill="none">
              <circle cx="7" cy="5" r="4" stroke="#fff" />
              <path d="M1 16c0-4 2-6 6-6 1 0 2 .2 2.500.5M10 13.500h6M13 10.500v6" stroke="#fff" />
            </svg>
            Share
          </div>
        </div>
      </div>

      <div className="h-[92px] bg-[#f3f3f3] border-b border-[#c6c6c6] flex shrink-0 relative">
        <ClipboardGroup />
        <FontGroup />
        <AlignmentGroup />
        <NumberGroup />
        <StylesGroup />
        <CellsGroup />
        <EditingGroup />
        <div className="flex-1 flex justify-end items-end pr-[10px] pb-[5px]">
          <svg width="11" height="7" viewBox="0 0 11 7" fill="none"><path d="M1 6l4.500-4.500L10 6" stroke="#666" strokeWidth="1.600" /></svg>
        </div>
      </div>

      <div className="h-[48px] bg-[#e6e6e6] flex items-start pt-[12px] shrink-0">
        <div className="ml-[5px] w-[102px] h-[24px] bg-white border border-[#c6c6c6] flex items-center justify-between pl-[7px] pr-[6px] text-[13px] text-[#444]">
          F3
          <Caret c="#777" />
        </div>
        <div className="w-[30px] h-[24px] flex flex-col items-center justify-center gap-[2px]">
          <span className="w-[2px] h-[2px] bg-[#aaa]" /><span className="w-[2px] h-[2px] bg-[#aaa]" /><span className="w-[2px] h-[2px] bg-[#aaa]" />
        </div>
        <div className="w-[110px] h-[24px] bg-white border border-[#c6c6c6] flex items-center">
          <span className="w-[36px] flex justify-center"><svg width="11" height="11" viewBox="0 0 11 11"><path d="M1 1l9 9M10 1l-9 9" stroke="#bdbdbd" strokeWidth="1.500" /></svg></span>
          <span className="w-[37px] flex justify-center"><svg width="13" height="11" viewBox="0 0 13 11" fill="none"><path d="M1 6l4 4 7-9" stroke="#bdbdbd" strokeWidth="2" /></svg></span>
          <span className="w-[35px] flex justify-center font-['Liberation_Serif',serif] italic font-bold text-[13px] text-[#666]">fx</span>
        </div>
        <div className="ml-[3px] flex-1 mr-[3px] h-[24px] bg-white border border-[#c6c6c6] flex items-center justify-end pr-[5px]">
          <svg width="10" height="6" viewBox="0 0 10 6" fill="none"><path d="M1 1l4 4 4-4" stroke="#555" /></svg>
        </div>
      </div>

      <div className="h-[626px] flex shrink-0">
        <div className="w-[1251px] flex flex-col shrink-0">
          <div className="flex h-[598px] shrink-0 overflow-hidden">
            <Grid />
            <VScroll />
          </div>
          <SheetBar />
        </div>
        <SidePanel />
      </div>
      <StatusBar />
      <Taskbar />
    </div>
  );
}
